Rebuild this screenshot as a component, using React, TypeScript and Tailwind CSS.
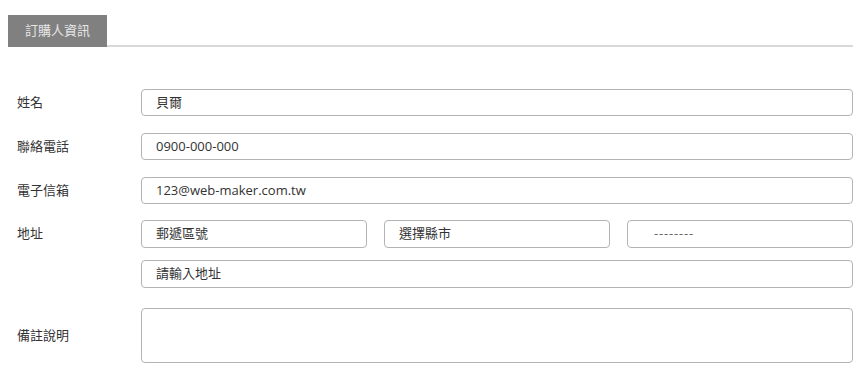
import React from "react";

const font = { fontFamily: '"Open Sans", "Noto Sans CJK TC", sans-serif' };

function Field({ text, className = "", muted = false }: { text?: string; className?: string; muted?: boolean }) {
  return (
    <div
      className={`h-[27px] flex items-center rounded-[4px] border border-[#b3b3b3] bg-white pl-[14px] text-[13px] ${muted ? "text-[#666]" : "text-[#333]"} ${className}`}
    >
      {text}
    </div>
  );
}

function Label({ text }: { text: string }) {
  return <div className="w-[133px] shrink-0 pl-[9px] text-[13px] text-[#333]">{text}</div>;
}

export default function App() {
  return (
    <div className="bg-white w-[866px] h-[379px] px-2 pt-[15px]" style={font}>
      <div className="flex border-b-2 border-[#d9d9d9] mr-[5px]">
        <div className="w-[99px] h-[32px] -mb-[2px] bg-[#808080] text-[#e6e6e6] text-[13px] flex items-center justify-center">
          訂購人資訊
        </div>
      </div>
      <div className="mt-[42px] mr-[5px] flex flex-col">
        <div className="flex items-center">
          <Label text="姓名" />
          <Field text="貝爾" className="flex-1" />
        </div>
        <div className="flex items-center mt-[17px]">
          <Label text="聯絡電話" />
          <Field text="0900-000-000" className="flex-1" />
        </div>
        <div className="flex items-center mt-[17px]">
          <Label text="電子信箱" />
          <Field text="123@web-maker.com.tw" className="flex-1" />
        </div>
        <div className="flex items-center mt-[16px]">
          <Label text="地址" />
          <div className="flex-1 grid grid-cols-3 gap-[17px]">
            <Field text="郵遞區號" className="h-[28px]" />
            <Field text="選擇縣市" className="h-[28px]" />
            <Field text="--------" className="h-[28px] pl-[26px] tracking-[0.8px]" muted />
          </div>
        </div>
        <div className="flex items-center mt-[12px]">
          <div className="w-[133px] shrink-0" />
          <Field text="請輸入地址" className="flex-1 h-[28px]" />
        </div>
        <div className="flex items-center mt-[20px]">
          <Label text="備註說明" />
          <div className="flex-1 h-[55px] rounded-[4px] border border-[#b3b3b3] bg-white" />
        </div>
      </div>
    </div>
  );
}
